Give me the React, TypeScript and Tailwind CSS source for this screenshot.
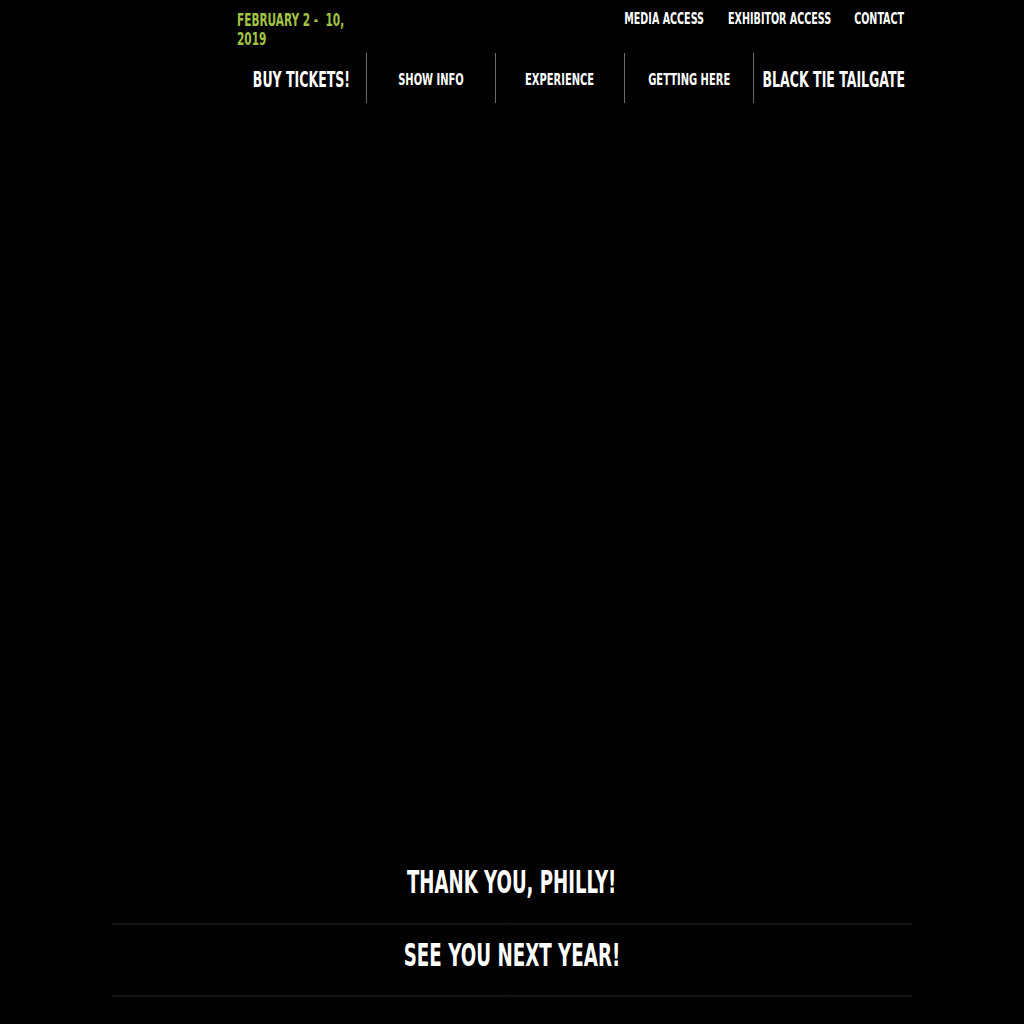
const font = { fontFamily: '"DejaVu Sans Condensed", "DejaVu Sans", "Liberation Sans", sans-serif' };

// Bebas-like condensed caps: squeeze a bold sans horizontally
function Squeeze({ children, className = '' }: { children: React.ReactNode; className?: string }) {
  return <span className={`inline-block whitespace-nowrap ${className}`}>{children}</span>;
}

const navItems = [
  { label: 'BUY TICKETS!', big: true },
  { label: 'SHOW INFO', big: false },
  { label: 'EXPERIENCE', big: false },
  { label: 'GETTING HERE', big: false },
  { label: 'BLACK TIE TAILGATE', big: true },
];

const topLinks = [
  { label: 'MEDIA ACCESS', w: 'w-[83px]' },
  { label: 'EXHIBITOR ACCESS', w: 'w-[106px]' },
  { label: 'CONTACT', w: 'w-[50px]' },
];

export default function App() {
  return (
    <div className="min-h-[1024px] bg-black text-white" style={font}>
      <div className="mx-auto w-[800px]">
        <header className="pl-[125px] pr-[8px]">
          <div className="flex items-start justify-between pt-[10px]">
            <div className="w-[120px] pt-[1px] text-[17px] font-bold leading-[19px] text-[#a3c442]">
              <div><Squeeze className="origin-left scale-x-[0.69]">FEBRUARY 2 -&nbsp; 10,</Squeeze></div>
              <div><Squeeze className="origin-left scale-x-[0.69]">2019</Squeeze></div>
            </div>
            <nav className="flex gap-[21px] text-[15px] font-bold leading-[18px]">
              {topLinks.map((link) => (
                <a key={link.label} className={`flex justify-center ${link.w}`}>
                  <Squeeze className="origin-center scale-x-[0.71]">{link.label}</Squeeze>
                </a>
              ))}
            </nav>
          </div>
          <ul className="mt-[4px] flex">
            {navItems.map((item, i) => (
              <li
                key={item.label}
                className={`flex h-[50px] w-[129px] shrink-0 items-center justify-center pt-[4px] ${i > 0 ? 'border-l border-[#6b6b6b]' : ''}`}
              >
                <Squeeze
                  className={
                    item.big
                      ? `origin-center text-[20.5px] font-bold scale-x-[0.68] ${i === 4 ? 'translate-x-[16px]' : ''}`
                      : 'origin-center text-[16.5px] font-bold scale-x-[0.67]'
                  }
                >
                  {item.label}
                </Squeeze>
              </li>
            ))}
          </ul>
        </header>

        <div className="h-[750px]" />

        <section className="text-center text-[31.5px] font-bold">
          <h2 className="h-[70px] leading-[58px]">
            <Squeeze className="origin-center scale-x-[0.64]">THANK YOU, PHILLY!</Squeeze>
          </h2>
          <div className="h-[5px] bg-gradient-to-b from-[#1c1c1c] to-black" />
          <h2 className="h-[67px] leading-[54px]">
            <Squeeze className="origin-center scale-x-[0.645]">SEE YOU NEXT YEAR!</Squeeze>
          </h2>
          <div className="h-[5px] bg-gradient-to-b from-[#1c1c1c] to-black" />
        </section>
      </div>
    </div>
  );
}
